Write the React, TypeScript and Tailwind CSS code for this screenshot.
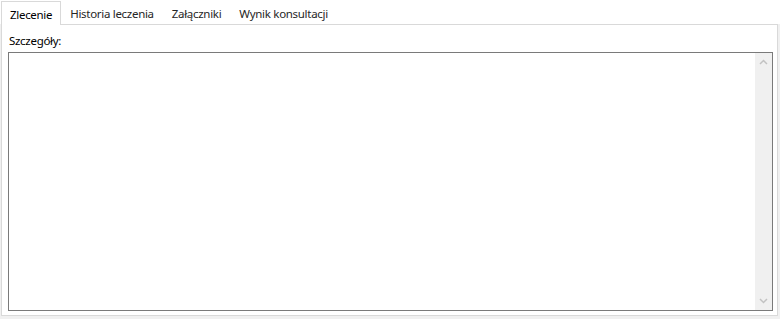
import React from 'react';

const TABS = ['Zlecenie', 'Historia leczenia', 'Załączniki', 'Wynik konsultacji'];

export default function App() {
  const active = 0;

  return (
    <div className="w-[780px] h-[319px] flex flex-col bg-[#f0f0f0] text-[11.5px] tracking-[-0.3px] text-black font-['Segoe_UI','Noto_Sans',sans-serif] overflow-hidden">
      {/* Tab strip */}
      <div className="h-[24px] flex items-end pl-[1px] bg-white shrink-0">
        {TABS.map((t, i) =>
          i === active ? (
            <div
              key={t}
              className="relative z-10 h-[24px] -mb-px px-[8px] pt-[4px] border border-b-0 border-[#d9d9d9] bg-white"
            >
              {t}
            </div>
          ) : (
            <div key={t} className="h-[22px] px-[9px] pt-[3px] text-[#262626]">
              {t}
            </div>
          )
        )}
      </div>

      {/* Panel */}
      <div className="flex-1 flex flex-col ml-px mr-[2px] mb-[3px] border border-[#d9d9d9] bg-white pl-[6px] pr-[4px] pb-[4px] pt-[8px]">
        <div className="leading-[16px] pl-px mb-[3px]">Szczegóły:</div>
        <div className="flex-1 flex border border-[#7a7a7a] bg-white">
          <div className="flex-1" />
          <div className="w-[17px] flex flex-col justify-between items-center bg-[#f0f0f0] py-[6px]">
            <svg width="9" height="6" viewBox="0 0 9 6" fill="none">
              <path d="M1 5 L4.5 1.5 L8 5" stroke="#c2c2c2" strokeWidth="1.5" />
            </svg>
            <svg width="9" height="6" viewBox="0 0 9 6" fill="none">
              <path d="M1 1 L4.5 4.5 L8 1" stroke="#c2c2c2" strokeWidth="1.5" />
            </svg>
          </div>
        </div>
      </div>
    </div>
  );
}
